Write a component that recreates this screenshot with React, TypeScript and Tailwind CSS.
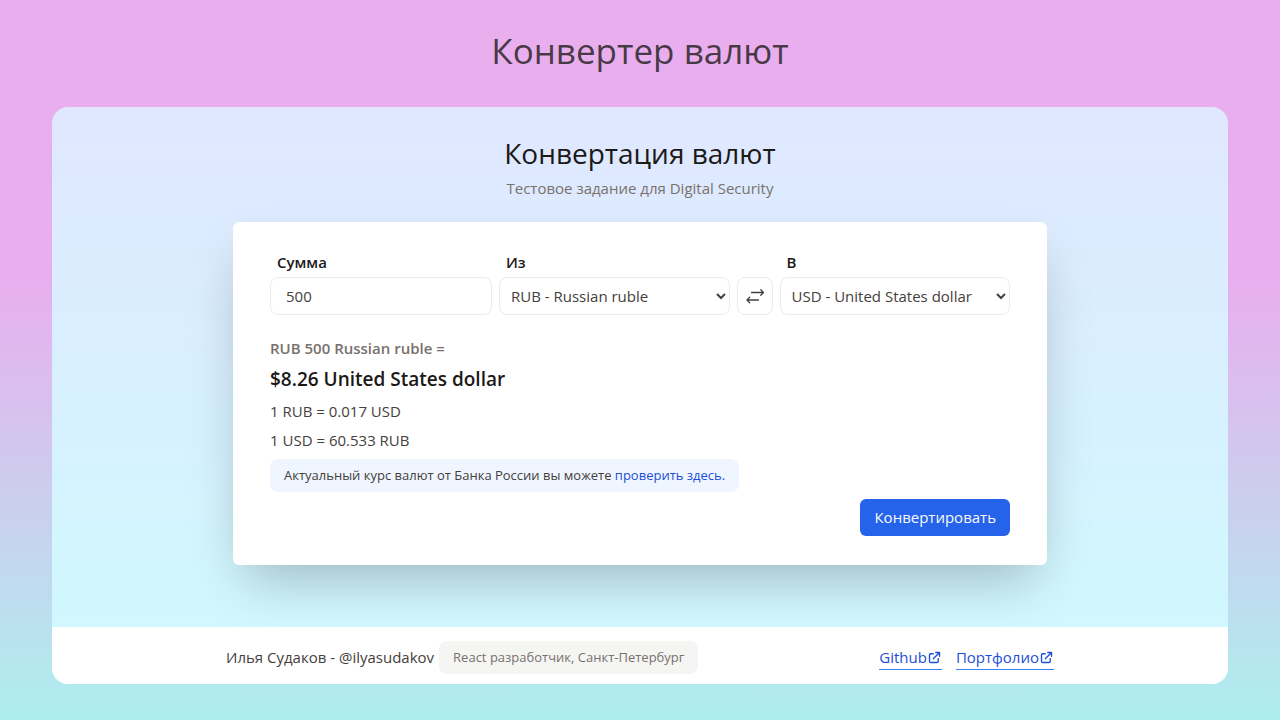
import { useState } from "react";

const fieldClass =
  "h-[38px] w-full rounded-lg border border-[#ebebeb] bg-white text-[15px] text-stone-700 outline-none";
const labelClass = "pl-[7px] text-[15px] leading-[22px] font-semibold text-stone-900";

const currencies = [
  { code: "RUB", name: "Russian ruble" },
  { code: "USD", name: "United States dollar" },
  { code: "EUR", name: "Euro" },
];

function ExternalIcon() {
  return (
    <svg viewBox="0 0 24 24" className="size-[15px]" fill="none" stroke="currentColor" strokeWidth="2.2" strokeLinecap="round" strokeLinejoin="round" aria-hidden="true">
      <path d="M10 6H6a2 2 0 0 0-2 2v10a2 2 0 0 0 2 2h10a2 2 0 0 0 2-2v-4M14 4h6m0 0v6m0-6L10 14" />
    </svg>
  );
}

function SwapIcon() {
  return (
    <svg viewBox="0 0 18 16" className="h-4 w-[18px] shrink-0" fill="none" stroke="currentColor" strokeWidth="1.3" strokeLinecap="round" strokeLinejoin="round" aria-hidden="true">
      <path d="M5.5 4.5h12M14.8 1.8l2.7 2.7-2.7 2.7M12.5 12H1M3.7 9.3 1 12l2.7 2.7" />
    </svg>
  );
}

function CurrencySelect({ id, label, value, onChange }: { id: string; label: string; value: string; onChange: (value: string) => void }) {
  return (
    <div className="flex flex-1 flex-col gap-1">
      <label htmlFor={id} className={labelClass}>{label}</label>
      <select id={id} value={value} onChange={(e) => onChange(e.target.value)} className={`${fieldClass} pl-[7px]`}>
        {currencies.map((c) => (
          <option key={c.code} value={c.code}>{c.code} - {c.name}</option>
        ))}
      </select>
    </div>
  );
}

export default function App() {
  const [amount, setAmount] = useState("500");
  const [from, setFrom] = useState("RUB");
  const [to, setTo] = useState("USD");

  return (
    <div className="flex min-h-screen flex-col bg-[linear-gradient(180deg,#e9aeee_0%,#e9aeee_38%,#aeeeee_100%)] px-[52px] pb-9 font-['Open_Sans','Noto_Sans',sans-serif] text-[15px] text-stone-700">
      <h1 className="pt-[29px] pb-[34px] text-center text-[35px] leading-[44px] text-stone-900/80">Конвертер валют</h1>
      <div className="flex grow flex-col overflow-hidden rounded-2xl bg-linear-to-b from-indigo-100 to-cyan-100">
        <main className="flex grow flex-col items-center px-6 pt-7 pb-[61px]">
          <h2 className="text-[28px] leading-9 text-stone-900">Конвертация валют</h2>
          <p className="mt-[6px] leading-[22px] text-stone-500">Тестовое задание для Digital Security</p>
          <form
            onSubmit={(e) => e.preventDefault()}
            className="mt-[23px] flex w-full max-w-[814px] flex-col rounded-md bg-white px-[37px] py-[29px] shadow-2xl"
          >
            <div className="flex items-end gap-[7px]">
              <div className="flex w-[222px] flex-col gap-1">
                <label htmlFor="amount" className={labelClass}>Сумма</label>
                <input id="amount" value={amount} onChange={(e) => setAmount(e.target.value)} className={`${fieldClass} px-[15px]`} />
              </div>
              <CurrencySelect id="from" label="Из" value={from} onChange={setFrom} />
              <button
                type="button"
                aria-label="Поменять валюты местами"
                onClick={() => {
                  setFrom(to);
                  setTo(from);
                }}
                className="flex h-[38px] w-9 items-center justify-center rounded-lg border border-[#ebebeb]"
              >
                <SwapIcon />
              </button>
              <CurrencySelect id="to" label="В" value={to} onChange={setTo} />
            </div>
            <p className="mt-[22px] leading-[22px] font-semibold text-stone-500">RUB 500 Russian ruble =</p>
            <p className="mt-[7px] text-[19px] leading-[27px] font-semibold text-stone-900">$8.26 United States dollar</p>
            <p className="mt-[7px] leading-[22px]">1 RUB = 0.017 USD</p>
            <p className="mt-[7px] leading-[22px]">1 USD = 60.533 RUB</p>
            <p className="mt-2 self-start rounded-lg bg-[#eff6ff] px-[14px] py-[6px] text-[13px] leading-[21px]">
              Актуальный курс валют от Банка России вы можете{" "}
              <a href="#rates" className="text-[#1d4ed8]">проверить здесь.</a>
            </p>
            <button type="submit" className="mt-[7px] self-end rounded-md bg-[#2563eb] px-[14px] py-[7px] leading-[23px] text-stone-50">
              Конвертировать
            </button>
          </form>
        </main>
        <footer className="flex justify-center bg-white px-6 pt-[14px] pb-[10px]">
          <div className="flex w-full max-w-[828px] items-center">
            <span>Илья Судаков - @ilyasudakov</span>
            <span className="ml-[5px] rounded-lg bg-stone-100 px-[14px] py-[6px] text-[13px] leading-[21px] text-stone-500">
              React разработчик, Санкт-Петербург
            </span>
            <nav className="ml-auto flex gap-[14px] text-[#1d4ed8]">
              <a href="#github" className="flex items-center border-b border-[#3b82f6] leading-[23px]">Github<ExternalIcon /></a>
              <a href="#portfolio" className="flex items-center border-b border-[#3b82f6] leading-[23px]">Портфолио<ExternalIcon /></a>
            </nav>
          </div>
        </footer>
      </div>
    </div>
  );
}
